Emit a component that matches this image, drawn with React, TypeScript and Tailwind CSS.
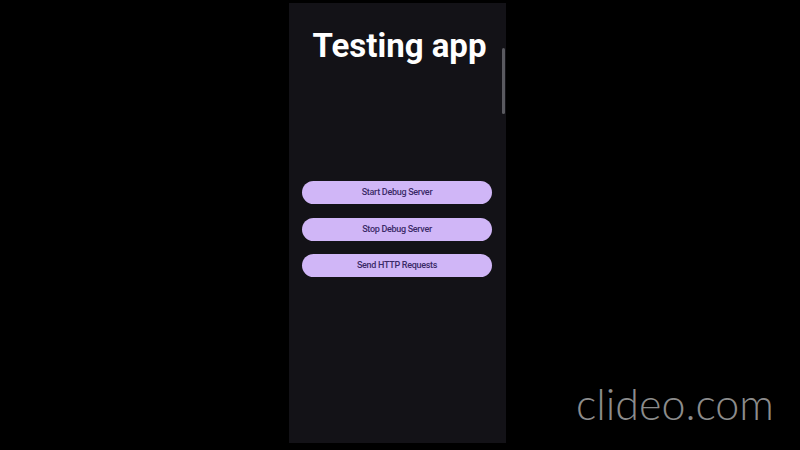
import React from 'react';

const buttons = ['Start Debug Server', 'Stop Debug Server', 'Send HTTP Requests'];

export default function App() {
    return (
        <div className="relative w-[800px] h-[450px] bg-black overflow-hidden" style={{ fontFamily: 'Roboto, "Noto Sans", sans-serif' }}>
            <div className="absolute left-[289px] top-[3px] w-[217px] h-[440px] bg-[#131217] flex flex-col items-center">
                <h1 className="mt-[23px] ml-[4px] text-[33px] leading-[40px] font-bold text-white">Testing app</h1>
                <div className="mt-[115px] flex flex-col gap-[13.5px] w-full px-[13px]">
                    {buttons.map((b) => (
                        <button key={b} className="h-[23px] w-[190px] rounded-full bg-[#d0b6f7] text-[#3b2a68] text-[9px] leading-[23px] font-medium tracking-[-0.3px]">
                            {b}
                        </button>
                    ))}
                </div>
                <div className="absolute right-[1px] top-[45px] w-[3px] h-[66px] rounded-full bg-[#5a5a60]" />
            </div>
            <div className="absolute left-[576px] top-[378px] text-[43px] leading-[52px] font-light text-[#8c8c8c]" style={{ fontFamily: 'Lato, sans-serif' }}>
                clideo.com
            </div>
        </div>
    );
}
